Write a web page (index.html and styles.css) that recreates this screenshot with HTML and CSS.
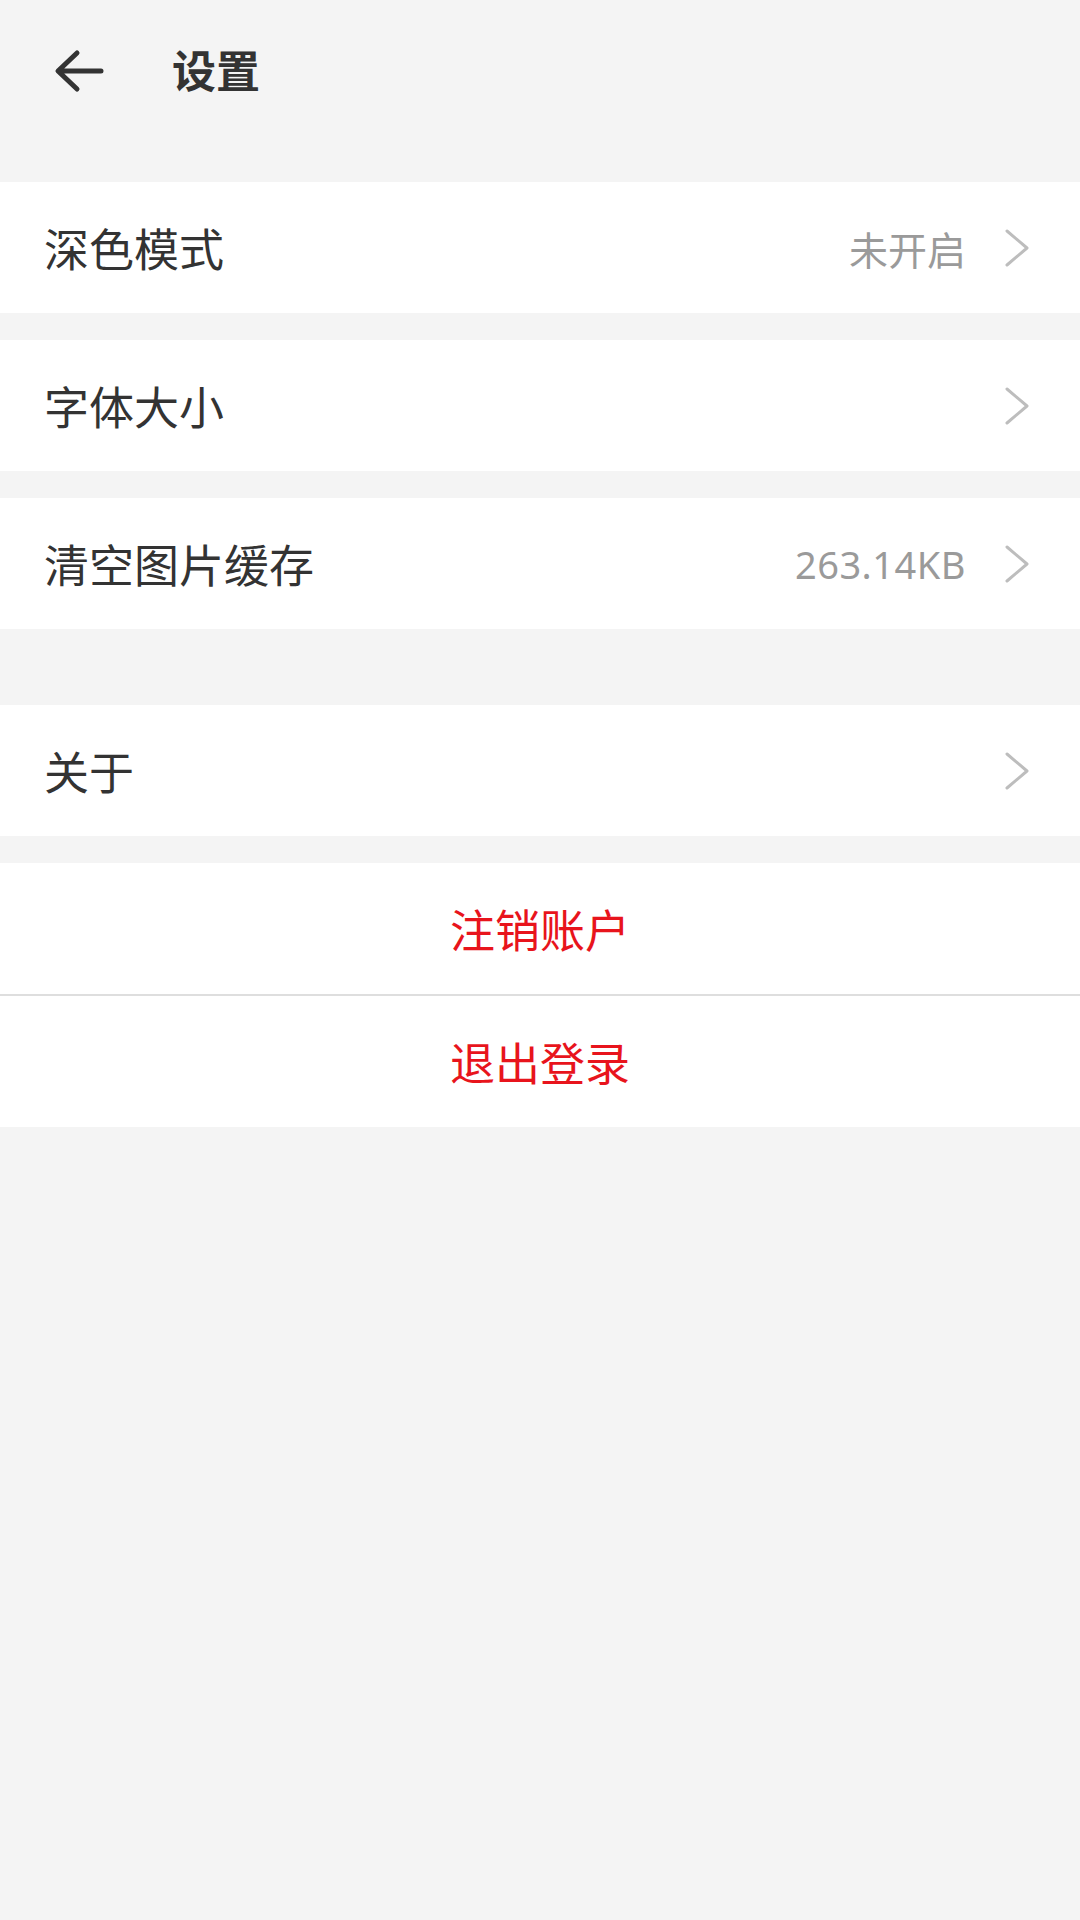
FILE: index.html
```html
<!DOCTYPE html>
<html lang="zh-CN">
<head>
  <meta charset="UTF-8" />
  <meta name="viewport" content="width=device-width, initial-scale=1.0"/>
  <title>设置</title>
  <link rel="stylesheet" href="styles.css">
</head>
<body>
  <div class="page">
    <!-- Header -->
    <header class="topbar">
      <button class="back-btn" aria-label="返回">
        <svg width="52" height="44" viewBox="0 0 52 44">
          <path d="M48 22 H6 M24 4 L5 22 L24 40" fill="none" stroke="#333" stroke-width="5" stroke-linecap="round" stroke-linejoin="round"/>
        </svg>
      </button>
      <h1 class="title">设置</h1>
    </header>

    <div class="group first">
      <div class="row">
        <span class="label">深色模式</span>
        <span class="value">未开启</span>
        <span class="chevron"><svg width="26" height="38" viewBox="0 0 26 38"><path d="M3 2 L23 19 L3 36" fill="none" stroke="#bdbdbd" stroke-width="3" stroke-linecap="round" stroke-linejoin="round"/></svg></span>
      </div>
    </div>

    <div class="group">
      <div class="row">
        <span class="label">字体大小</span>
        <span class="chevron"><svg width="26" height="38" viewBox="0 0 26 38"><path d="M3 2 L23 19 L3 36" fill="none" stroke="#bdbdbd" stroke-width="3" stroke-linecap="round" stroke-linejoin="round"/></svg></span>
      </div>
    </div>

    <div class="group">
      <div class="row">
        <span class="label">清空图片缓存</span>
        <span class="value num">263.14KB</span>
        <span class="chevron"><svg width="26" height="38" viewBox="0 0 26 38"><path d="M3 2 L23 19 L3 36" fill="none" stroke="#bdbdbd" stroke-width="3" stroke-linecap="round" stroke-linejoin="round"/></svg></span>
      </div>
    </div>

    <div class="group spaced">
      <div class="row">
        <span class="label">关于</span>
        <span class="chevron"><svg width="26" height="38" viewBox="0 0 26 38"><path d="M3 2 L23 19 L3 36" fill="none" stroke="#bdbdbd" stroke-width="3" stroke-linecap="round" stroke-linejoin="round"/></svg></span>
      </div>
    </div>

    <div class="group">
      <div class="row action">注销账户</div>
      <div class="row action divided">退出登录</div>
    </div>
  </div>
</body>
</html>
```

FILE: styles.css
```css
* {
  box-sizing: border-box;
  margin: 0;
  padding: 0;
}

body {
  background: #f4f4f4;
  font-family: "Noto Sans", "Noto Sans CJK SC", sans-serif;
  color: #333;
  width: 1080px;
  min-height: 1920px;
}

.topbar {
  height: 142px;
  display: flex;
  align-items: center;
  padding-left: 53px;
}

.back-btn {
  background: none;
  border: none;
  display: flex;
  align-items: center;
  width: 52px;
  height: 44px;
}

.title {
  margin-left: 67px;
  font-size: 44px;
  font-weight: 700;
  color: #333;
  line-height: 1;
}

.group {
  background: #fff;
  margin-top: 27px;
}

.group.first {
  margin-top: 40px;
}

.group.spaced {
  margin-top: 76px;
}

.row {
  height: 131px;
  display: flex;
  align-items: center;
  padding: 0 50px 0 44px;
}

.label {
  flex: 1;
  font-size: 45px;
  color: #333;
}

.value {
  font-size: 39px;
  color: #9a9a9a;
  margin-right: 38px;
}

.value.num {
  font-size: 38px;
  letter-spacing: 0.5px;
}

.chevron {
  display: flex;
  align-items: center;
}

.row.action {
  justify-content: center;
  padding: 0;
  font-size: 45px;
  color: #e8141c;
}

.row.divided {
  height: 133px;
  border-top: 2px solid #dedede;
}
```
